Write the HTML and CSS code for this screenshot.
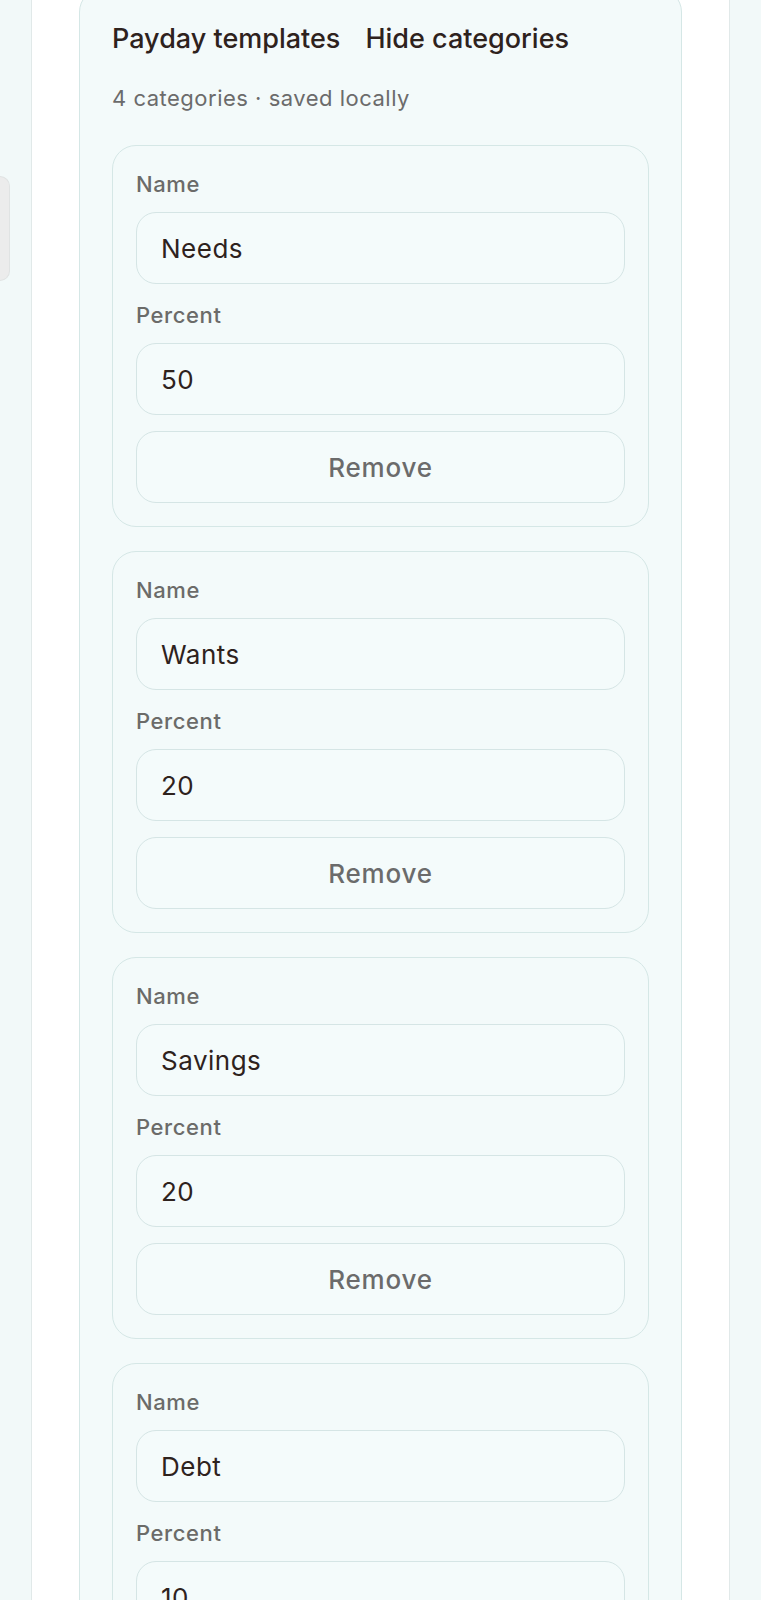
FILE: index.html
```html
<!DOCTYPE html>
<html lang="en">
<head>
<meta charset="utf-8">
<title>Payday templates</title>
<link rel="stylesheet" href="styles.css">
</head>
<body>
<div class="page">
  <aside class="gutter">
    <div class="tab"></div>
  </aside>
  <main class="panel">
    <section class="templates">
      <div class="head">
        <h2 class="title">Payday templates</h2>
        <button class="toggle" type="button">Hide categories</button>
      </div>
      <p class="meta">4 categories · saved locally</p>
      <div class="list">
        <div class="cat">
          <label class="field"><span class="label">Name</span><input class="input" type="text" value="Needs"></label>
          <label class="field"><span class="label">Percent</span><input class="input" type="text" value="50"></label>
          <button class="remove" type="button">Remove</button>
        </div>
        <div class="cat">
          <label class="field"><span class="label">Name</span><input class="input" type="text" value="Wants"></label>
          <label class="field"><span class="label">Percent</span><input class="input" type="text" value="20"></label>
          <button class="remove" type="button">Remove</button>
        </div>
        <div class="cat">
          <label class="field"><span class="label">Name</span><input class="input" type="text" value="Savings"></label>
          <label class="field"><span class="label">Percent</span><input class="input" type="text" value="20"></label>
          <button class="remove" type="button">Remove</button>
        </div>
        <div class="cat">
          <label class="field"><span class="label">Name</span><input class="input" type="text" value="Debt"></label>
          <label class="field"><span class="label">Percent</span><input class="input" type="text" value="10"></label>
          <button class="remove" type="button">Remove</button>
        </div>
      </div>
    </section>
  </main>
  <aside class="gutter"></aside>
</div>
</body>
</html>
```

FILE: styles.css
```css
* { box-sizing: border-box; }
html, body {
  margin: 0;
  padding: 0;
  background: #f2f9f9;
  font-family: Inter, "Noto Sans", sans-serif;
  color: #2e221d;
  height: 1600px;
  overflow: hidden;
}
.page {
  display: grid;
  grid-template-columns: 31px 1fr 31px;
  min-height: 1600px;
}
.gutter {
  background: #f2f9f9;
}
.tab {
  margin-top: 176px;
  width: 10px;
  height: 105px;
  background: #ececec;
  border: 1px solid #e0e3e3;
  border-left: none;
  border-radius: 0 12px 12px 0;
}
.panel {
  background: #ffffff;
  border-left: 1px solid #e1e9e9;
  border-right: 1px solid #e1e9e9;
  padding: 0 47px;
}
.templates {
  margin-top: -12px;
  background: #f3fafa;
  border: 1px solid #d5e7e6;
  border-radius: 24px;
  padding: 32px 32px 32px;
}
.head {
  display: flex;
  align-items: center;
  gap: 25px;
}
.title, .toggle {
  margin: 0;
  font-family: inherit;
  font-size: 27px;
  line-height: 36px;
  font-weight: 500;
  color: #2e221d;
}
.toggle {
  background: none;
  border: none;
  padding: 0;
}
.meta {
  margin: 27px 0 0;
  font-size: 22px;
  line-height: 29px;
  letter-spacing: 0.5px;
  color: #6b6b6b;
}
.list {
  margin-top: 32px;
  display: flex;
  flex-direction: column;
  gap: 24px;
}
.cat {
  border: 1px solid #d5e7e6;
  border-radius: 24px;
  padding: 23px 23px 23px;
  display: flex;
  flex-direction: column;
  gap: 16px;
}
.field {
  display: flex;
  flex-direction: column;
  gap: 12px;
}
.label {
  font-size: 22px;
  line-height: 31px;
  font-weight: 500;
  letter-spacing: 0.6px;
  color: #6b6b69;
}
.input {
  height: 72px;
  width: 100%;
  border: 1px solid #d5e5e5;
  border-radius: 20px;
  background: #f4fbfb;
  padding: 0 24px;
  font-family: inherit;
  font-size: 26px;
  letter-spacing: 0.5px;
  color: #2e221d;
  outline: none;
}
.remove {
  height: 72px;
  width: 100%;
  border: 1px solid #d5e5e5;
  border-radius: 20px;
  background: #f4fbfb;
  font-family: inherit;
  font-size: 26px;
  font-weight: 500;
  letter-spacing: 0.8px;
  color: #6b6b6b;
}
```
